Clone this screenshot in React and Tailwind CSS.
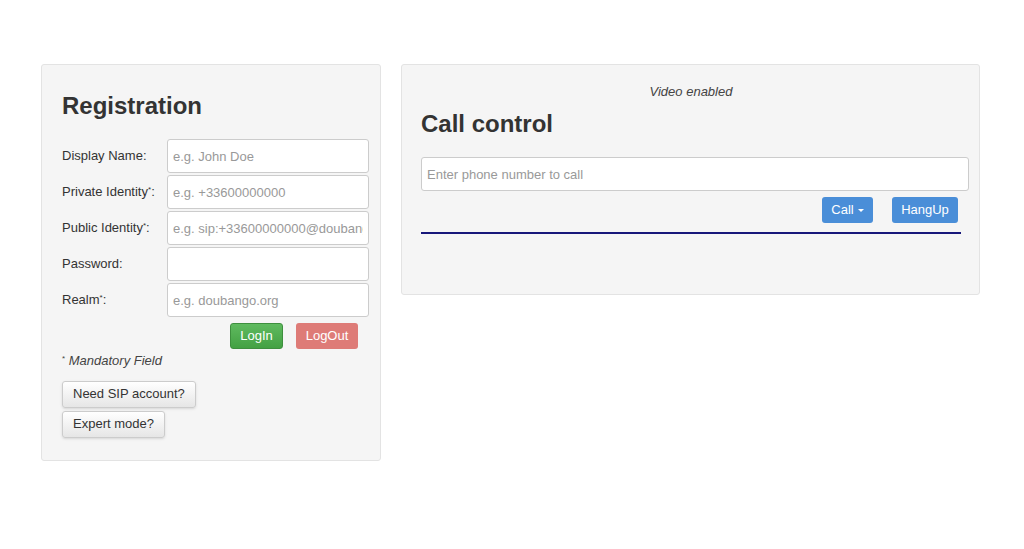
import React from "react";

const Field = ({ label, star, placeholder }) => (
  <div className="flex items-center h-[34px]">
    <label className="w-[105px] text-[13px] text-[#333]">
      {label}
      {star && <sup className="text-[8px]">*</sup>}:
    </label>
    <input
      className="w-[202px] h-[34px] px-[5px] bg-white border border-[#ccc] rounded-[3px] text-[13px] text-[#333] placeholder:text-[#999] outline-none"
      placeholder={placeholder}
    />
  </div>
);

const App = () => {
  return (
    <div className="w-[1024px] h-[549px] bg-white flex items-start gap-[20px] pl-[41px] pt-[64px] font-['Liberation_Sans',Arial,sans-serif] text-[#333]">
      {/* Registration */}
      <div className="w-[340px] h-[397px] bg-[#f5f5f5] border border-[#e3e3e3] rounded-[3px] pl-[20px] pr-[10px] flex flex-col">
        <h2 className="mt-[27px] text-[24px] font-bold leading-[28px] text-[#333]">Registration</h2>
        <div className="mt-[19px] flex flex-col gap-[2px]">
          <Field label="Display Name" placeholder="e.g. John Doe" />
          <Field label="Private Identity" star placeholder="e.g. +33600000000" />
          <Field label="Public Identity" star placeholder="e.g. sip:+33600000000@doubango.org" />
          <Field label="Password" />
          <Field label="Realm" star placeholder="e.g. doubango.org" />
        </div>
        <div className="flex justify-end gap-[13px] mt-[6px] pr-[12px]">
          <button className="w-[53px] h-[26px] rounded-[3px] bg-gradient-to-b from-[#5fba5f] to-[#43a143] border border-[#3e8f3e] text-white text-[13px]">
            LogIn
          </button>
          <button className="w-[62px] h-[26px] rounded-[3px] bg-[#de7b77] text-white text-[13px]">
            LogOut
          </button>
        </div>
        <p className="mt-[2px] text-[13px] italic text-[#444]">
          <sup className="text-[8px] not-italic">*</sup> Mandatory Field
        </p>
        <div className="mt-[10px] flex flex-col items-start gap-[3px]">
          <button className="h-[27px] px-[10px] text-[13px] text-[#333] rounded-[3px] border border-[#ccc] bg-gradient-to-b from-white to-[#e6e6e6] shadow-sm">
            Need SIP account?
          </button>
          <button className="h-[27px] px-[10px] text-[13px] text-[#333] rounded-[3px] border border-[#ccc] bg-gradient-to-b from-white to-[#e6e6e6] shadow-sm">
            Expert mode?
          </button>
        </div>
      </div>

      {/* Call control */}
      <div className="w-[579px] h-[231px] bg-[#f5f5f5] border border-[#e3e3e3] rounded-[3px] pl-[19px] pr-[10px] flex flex-col">
        <p className="mt-[19px] text-center text-[13px] italic text-[#444] leading-[16px] pr-[8px]">Video enabled</p>
        <h2 className="mt-[10px] text-[24px] font-bold leading-[28px] text-[#333]">Call control</h2>
        <input
          className="mt-[19px] w-[548px] h-[34px] px-[5px] bg-white border border-[#ccc] rounded-[3px] text-[13px] placeholder:text-[#999] outline-none"
          placeholder="Enter phone number to call"
        />
        <div className="flex justify-end gap-[19px] mt-[6px] pr-[11px]">
          <button className="w-[51px] h-[26px] rounded-[3px] bg-[#4a8ed8] text-white text-[13px] flex items-center justify-center gap-[4px]">
            Call
            <span className="w-0 h-0 border-l-[3px] border-r-[3px] border-t-[3px] border-l-transparent border-r-transparent border-t-white" />
          </button>
          <button className="w-[66px] h-[26px] rounded-[3px] bg-[#4a8ed8] text-white text-[13px]">
            HangUp
          </button>
        </div>
        <div className="mt-[9px] w-[540px] h-[2px] bg-[#17177a]" />
      </div>
    </div>
  );
};

export default App;
